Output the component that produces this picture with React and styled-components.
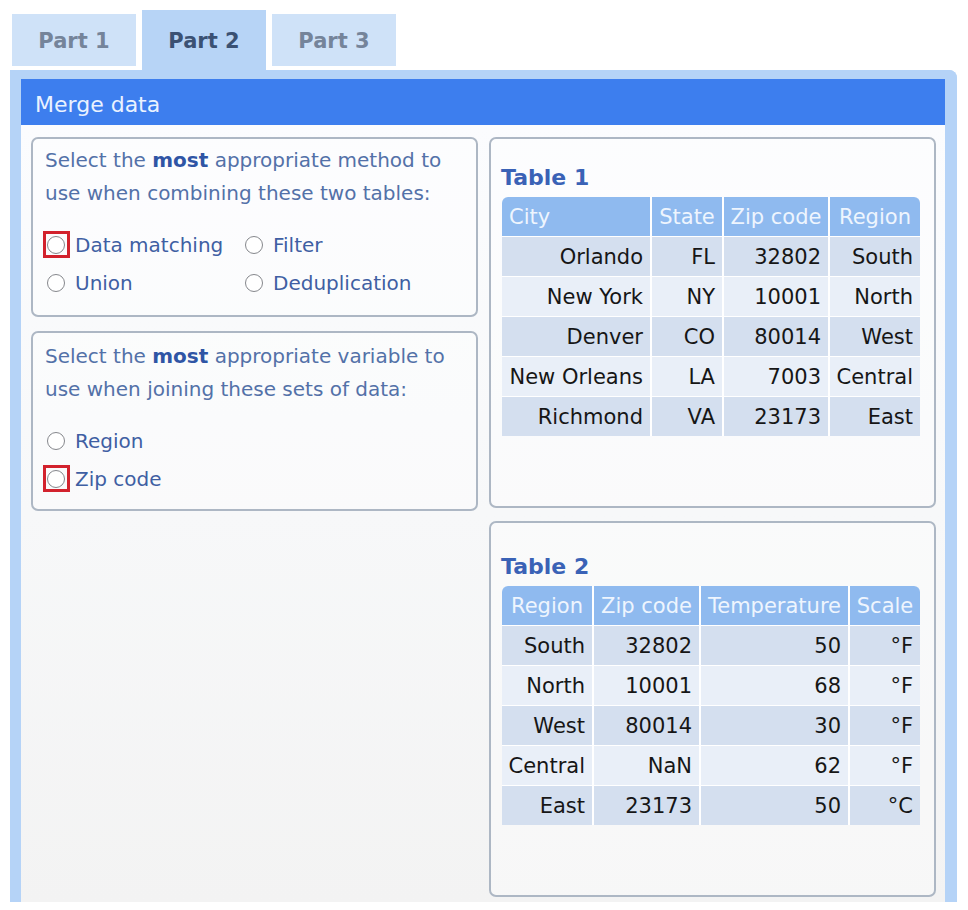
import React from "react";
import styled, { createGlobalStyle } from "styled-components";

const Global = createGlobalStyle`
  html, body { margin: 0; padding: 0; background: #ffffff; }
  body { font-family: "DejaVu Sans", Verdana, sans-serif; }
  * { box-sizing: border-box; }
`;

const Page = styled.div`
  padding: 10px 0 0 10px;
  width: 957px;
`;

const TabBar = styled.nav`
  display: flex;
  align-items: flex-start;
  gap: 6px;
  margin-left: 2px;
  height: 60px;
`;

const Tab = styled.div`
  width: 124px;
  height: ${(p) => (p.$active ? 60 : 52)}px;
  margin-top: ${(p) => (p.$active ? 0 : 4)}px;
  background: ${(p) => (p.$active ? "#b7d4f6" : "#cfe2f8")};
  color: ${(p) => (p.$active ? "#3b5173" : "#75849a")};
  font-weight: bold;
  font-size: 21px;
  display: flex;
  align-items: center;
  justify-content: center;
  padding-top: 2px;
`;

const Panel = styled.section`
  height: 832px;
  border-style: solid;
  border-color: #b5d3f7;
  border-width: 9px 12px 0 11px;
  border-top-right-radius: 8px;
  display: flex;
  flex-direction: column;
`;

const PanelHeader = styled.h1`
  margin: 0;
  height: 46px;
  background: #3d7eee;
  color: #eaf2ff;
  font-weight: normal;
  font-size: 22px;
  display: flex;
  align-items: center;
  padding: 5px 0 0 14px;
`;

const Content = styled.div`
  flex: 1;
  display: grid;
  grid-template-columns: 447px 447px;
  column-gap: 11px;
  padding: 12px 9px 5px 10px;
  background: linear-gradient(#fbfcfe 0%, #f7f8f9 50%, #f3f3f3 100%);
`;

const Column = styled.div`
  display: flex;
  flex-direction: column;
  gap: ${(p) => p.$gap}px;
  align-self: ${(p) => (p.$stretch ? "stretch" : "start")};
`;

const Card = styled.div`
  border: 2px solid #adb7c4;
  border-radius: 7px;
  background: rgba(255, 255, 255, 0.35);
`;

const QuestionCard = styled(Card)`
  height: 180px;
  padding: ${(p) => p.$top}px 12px 0 12px;
`;

const Question = styled.p`
  margin: 0;
  font-size: 20px;
  line-height: 33px;
  color: #5371a8;

  b {
    color: #2f55a5;
  }
`;

const QuestionLine = styled.span`
  display: block;
  white-space: nowrap;
`;

const Options = styled.div`
  display: grid;
  grid-template-columns: ${(p) => (p.$cols === 2 ? "198px auto" : "auto")};
  grid-auto-rows: 38px;
  margin-top: 16px;
`;

const Option = styled.label`
  display: flex;
  align-items: center;
  gap: 10px;
  font-size: 20px;
  color: #3f5fa3;
`;

const RadioWrap = styled.span`
  position: relative;
  margin-left: 2px;
  width: 18px;
  height: 18px;
  flex: none;
`;

const Radio = styled.span`
  display: block;
  width: 18px;
  height: 18px;
  border-radius: 50%;
  border: 1.5px solid #85878c;
  background: #ffffff;
`;

const Marker = styled.span`
  position: absolute;
  left: -4px;
  top: -5px;
  width: 27px;
  height: 27px;
  border: 3px solid #d2222d;
`;

const TableCard = styled(Card)`
  flex: 1;
  padding: ${(p) => p.$top}px 11px 0 11px;
`;

const TableTitle = styled.h2`
  margin: 0 0 4px -1px;
  font-size: 22px;
  line-height: 30px;
  font-weight: bold;
  color: #3a62b6;
`;

const Grid = styled.div`
  display: grid;
  grid-template-columns: ${(p) => p.$cols};
  column-gap: 2px;
  row-gap: 1px;
  width: 418px;
  background: #ffffff;
  border-radius: 6px 6px 0 0;
  overflow: hidden;
`;

const HeadCell = styled.div`
  height: 39px;
  background: #8fbaef;
  color: #eef5fe;
  font-size: 21px;
  display: flex;
  align-items: center;
  justify-content: ${(p) => (p.$left ? "flex-start" : "center")};
  padding: 0 7px;
  white-space: nowrap;
`;

const Cell = styled.div`
  height: 39px;
  background: ${(p) => (p.$odd ? "#d4dfef" : "#e9eff8")};
  color: #161616;
  font-size: 21px;
  display: flex;
  align-items: center;
  justify-content: flex-end;
  padding: 0 7px;
  white-space: nowrap;
`;

function RadioOption({ label, marked }) {
  return (
    <Option>
      <RadioWrap>
        <Radio />
        {marked && <Marker />}
      </RadioWrap>
      {label}
    </Option>
  );
}

function DataTable({ title, cols, headers, rows, top }) {
  return (
    <TableCard $top={top}>
      <TableTitle>{title}</TableTitle>
      <Grid $cols={cols}>
        {headers.map((h) => (
          <HeadCell key={h} $left={h === "City"}>
            {h}
          </HeadCell>
        ))}
        {rows.map((r, ri) =>
          r.map((c, ci) => (
            <Cell key={ri + "-" + ci} $odd={ri % 2 === 0}>
              {c}
            </Cell>
          ))
        )}
      </Grid>
    </TableCard>
  );
}

const table1 = [
  ["Orlando", "FL", "32802", "South"],
  ["New York", "NY", "10001", "North"],
  ["Denver", "CO", "80014", "West"],
  ["New Orleans", "LA", "7003", "Central"],
  ["Richmond", "VA", "23173", "East"],
];

const table2 = [
  ["South", "32802", "50", "°F"],
  ["North", "10001", "68", "°F"],
  ["West", "80014", "30", "°F"],
  ["Central", "NaN", "62", "°F"],
  ["East", "23173", "50", "°C"],
];

export default function App() {
  return (
    <>
      <Global />
      <Page>
        <TabBar>
          <Tab>Part 1</Tab>
          <Tab $active>Part 2</Tab>
          <Tab>Part 3</Tab>
        </TabBar>
        <Panel>
          <PanelHeader>Merge data</PanelHeader>
          <Content>
            <Column $gap={14}>
              <QuestionCard $top={5}>
                <Question>
                  <QuestionLine>
                    Select the <b>most</b> appropriate method to
                  </QuestionLine>
                  <QuestionLine>use when combining these two tables:</QuestionLine>
                </Question>
                <Options $cols={2}>
                  <RadioOption label="Data matching" marked />
                  <RadioOption label="Filter" />
                  <RadioOption label="Union" />
                  <RadioOption label="Deduplication" />
                </Options>
              </QuestionCard>
              <QuestionCard $top={7}>
                <Question>
                  <QuestionLine>
                    Select the <b>most</b> appropriate variable to
                  </QuestionLine>
                  <QuestionLine>use when joining these sets of data:</QuestionLine>
                </Question>
                <Options $cols={1}>
                  <RadioOption label="Region" />
                  <RadioOption label="Zip code" marked />
                </Options>
              </QuestionCard>
            </Column>
            <Column $stretch $gap={13}>
              <DataTable
                title="Table 1"
                top={24}
                cols="148px 70px 104px 90px"
                headers={["City", "State", "Zip code", "Region"]}
                rows={table1}
              />
              <DataTable
                title="Table 2"
                top={29}
                cols="90px 105px 147px 70px"
                headers={["Region", "Zip code", "Temperature", "Scale"]}
                rows={table2}
              />
            </Column>
          </Content>
        </Panel>
      </Page>
    </>
  );
}
